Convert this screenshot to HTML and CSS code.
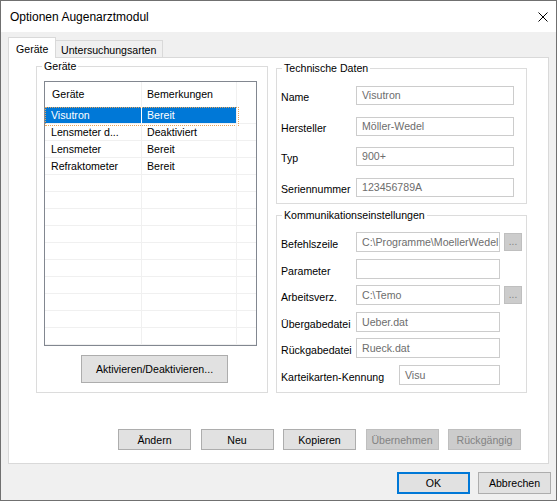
FILE: index.html
```html
<!DOCTYPE html>
<html lang="de">
<head>
  <meta charset="UTF-8">
  <title>Optionen Augenarztmodul</title>
  <link rel="stylesheet" href="styles.css">
</head>
<body>
  <div class="window">
    <div class="titlebar">
      <span class="title">Optionen Augenarztmodul</span>
      <svg class="close" width="10" height="10" viewBox="0 0 10 10"><path d="M0.5 0.5L9.5 9.5M9.5 0.5L0.5 9.5" stroke="#000" stroke-width="1" fill="none"/></svg>
    </div>

    <div class="tabs">
      <div class="tab active">Geräte</div>
      <div class="tab plain">Untersuchungsarten</div>
    </div>

    <div class="panel">
      <div class="groups">
        <fieldset class="group geraete">
          <legend>Geräte</legend>
          <div class="geraete-inner">
            <div class="liste">
              <div class="row head"><div>Geräte</div><div>Bemerkungen</div><div></div></div>
              <div class="row sel"><div>Visutron</div><div>Bereit</div><div></div></div>
              <div class="row"><div>Lensmeter d...</div><div>Deaktiviert</div><div></div></div>
              <div class="row"><div>Lensmeter</div><div>Bereit</div><div></div></div>
              <div class="row"><div>Refraktometer</div><div>Bereit</div><div></div></div>
              <div class="row"><div></div><div></div><div></div></div>
              <div class="row"><div></div><div></div><div></div></div>
              <div class="row"><div></div><div></div><div></div></div>
              <div class="row"><div></div><div></div><div></div></div>
              <div class="row"><div></div><div></div><div></div></div>
              <div class="row"><div></div><div></div><div></div></div>
              <div class="row"><div></div><div></div><div></div></div>
              <div class="row"><div></div><div></div><div></div></div>
              <div class="row"><div></div><div></div><div></div></div>
              <div class="row"><div></div><div></div><div></div></div>
            </div>
            <button class="btn btn-aktiv">Aktivieren/Deaktivieren...</button>
          </div>
        </fieldset>

        <div class="rechts">
          <fieldset class="group">
            <legend>Technische Daten</legend>
            <div class="felder tech">
              <div class="feld"><label>Name</label><div class="eingabe">Visutron</div></div>
              <div class="feld"><label>Hersteller</label><div class="eingabe">Möller-Wedel</div></div>
              <div class="feld"><label>Typ</label><div class="eingabe">900+</div></div>
              <div class="feld"><label>Seriennummer</label><div class="eingabe">123456789A</div></div>
            </div>
          </fieldset>

          <fieldset class="group komm">
            <legend>Kommunikationseinstellungen</legend>
            <div class="felder">
              <div class="feld"><label>Befehlszeile</label><div class="eingabe">C:\Programme\MoellerWedel</div><div class="punkte">...</div></div>
              <div class="feld"><label>Parameter</label><div class="eingabe"></div></div>
              <div class="feld"><label>Arbeitsverz.</label><div class="eingabe">C:\Temo</div><div class="punkte">...</div></div>
              <div class="feld"><label>Übergabedatei</label><div class="eingabe">Ueber.dat</div></div>
              <div class="feld"><label>Rückgabedatei</label><div class="eingabe">Rueck.dat</div></div>
              <div class="feld kennung"><label>Karteikarten-Kennung</label><div class="eingabe">Visu</div></div>
            </div>
          </fieldset>
        </div>
      </div>

      <div class="aktionen">
        <button class="btn">Ändern</button>
        <button class="btn">Neu</button>
        <button class="btn">Kopieren</button>
        <button class="btn" disabled>Übernehmen</button>
        <button class="btn" disabled>Rückgängig</button>
      </div>
    </div>

    <div class="dialog-buttons">
      <button class="btn default">OK</button>
      <button class="btn">Abbrechen</button>
    </div>
  </div>
</body>
</html>
```

FILE: styles.css
```css
* { box-sizing: border-box; }
body { margin: 0; background: #fff; font-family: "Liberation Sans", Arial, sans-serif; font-size: 10.6px; color: #000; }

.window { width: 557px; height: 501px; border: 1px solid #707070; background: #f0f0f0; display: flex; flex-direction: column; }
.titlebar { height: 31px; flex: none; background: #fff; display: flex; align-items: center; justify-content: space-between; padding: 0 8px 0 9px; font-size: 12px; }

.tabs { display: flex; align-items: flex-end; padding: 5px 0 0 7px; }
.tab { border: 1px solid #d9d9d9; border-bottom: 0; white-space: nowrap; }
.tab.active { width: 48px; height: 21px; padding: 3px 0 0 7px; line-height: 16px; background: #fff; margin-bottom: -1px; position: relative; z-index: 1; }
.tab.plain { width: 107px; height: 17px; padding: 3px 0 0 5px; line-height: 13px; border-left: 0; }

.panel { margin: 0 7px; height: 407px; flex: none; border: 1px solid #d9d9d9; background: #fff; display: flex; flex-direction: column; padding: 1px 0 13px 27px; }
.groups { display: flex; gap: 8px; align-items: flex-start; }

.group { margin: 0; padding: 0; border: 1px solid #dcdcdc; min-width: 0; }
.group legend { padding: 0 2px; margin-left: 5px; line-height: 15px; }

.geraete { width: 232px; }
.geraete-inner { padding: 7px 0 9px 7px; }
.liste { width: 213px; height: 265px; border: 1px solid #828790; background: #fff; overflow: hidden; }
.row { display: grid; grid-template-columns: 97px 95px 1fr; height: 17px; line-height: 16px; position: relative; }
.row > div { border-right: 1px solid #f0f0f0; border-bottom: 1px solid #f0f0f0; white-space: nowrap; overflow: hidden; }
.row > div:first-child { padding-left: 6px; }
.row > div:nth-child(2) { padding-left: 5px; }
.row > div:last-child { border-right: 0; }
.row.head { height: 25px; line-height: 25px; }
.row.head > div { border-bottom: 0; }
.row.head > div:first-child { padding-left: 7px; }
.row.sel > div:first-child, .row.sel > div:nth-child(2) { background: #0078d7; color: #fff; }
.row.sel > div:first-child { border-right-color: #fff; }
.row.sel::after { content: ""; position: absolute; left: 0; top: 0; width: 192px; height: 17px; border: 1px dotted #e9a55a; pointer-events: none; }

.btn { font-family: inherit; font-size: inherit; color: #000; background: #e1e1e1; border: 1px solid #adadad; width: 73px; height: 21px; padding: 0; margin: 0; }
.btn:disabled { background: #cccccc; border-color: #bfbfbf; color: #838383; }
.btn-aktiv { display: block; width: 147px; height: 28px; margin: 9px 0 0 37px; }

.rechts { width: 251px; margin-top: 2px; display: flex; flex-direction: column; gap: 4px; }
.felder { display: flex; flex-direction: column; padding: 9px 0 7px 4px; row-gap: 6.6px; }
.felder.tech { padding: 10px 0 6px 4px; row-gap: 11.67px; }
.feld { display: flex; align-items: flex-start; height: 20px; }
.feld label { width: 75px; flex: none; padding-top: 5px; line-height: 15px; white-space: nowrap; }
.eingabe { width: 144px; height: 20px; border: 1px solid #cccccc; background: #fff; color: #6d6d6d; padding-left: 5px; line-height: 18px; white-space: nowrap; overflow: hidden; }
.tech .feld { height: 19px; }
.tech .feld label { padding-top: 4px; }
.tech .eingabe { width: 158px; height: 19px; line-height: 17px; }
.kennung label { width: 118px; }
.kennung .eingabe { width: 101px; }
.punkte { width: 18px; height: 18px; margin: 1px 0 0 4px; background: #cccccc; border: 1px solid #bfbfbf; color: #838383; text-align: center; line-height: 16px; font-size: 10px; }

.aktionen { margin-top: auto; display: flex; justify-content: flex-end; gap: 9.5px; padding-right: 27px; }

.dialog-buttons { display: flex; justify-content: flex-end; gap: 8px; padding: 8px 5px 0 0; }
.dialog-buttons .btn { height: 22px; }
.btn.default { border: 2px solid #0078d7; }
```
